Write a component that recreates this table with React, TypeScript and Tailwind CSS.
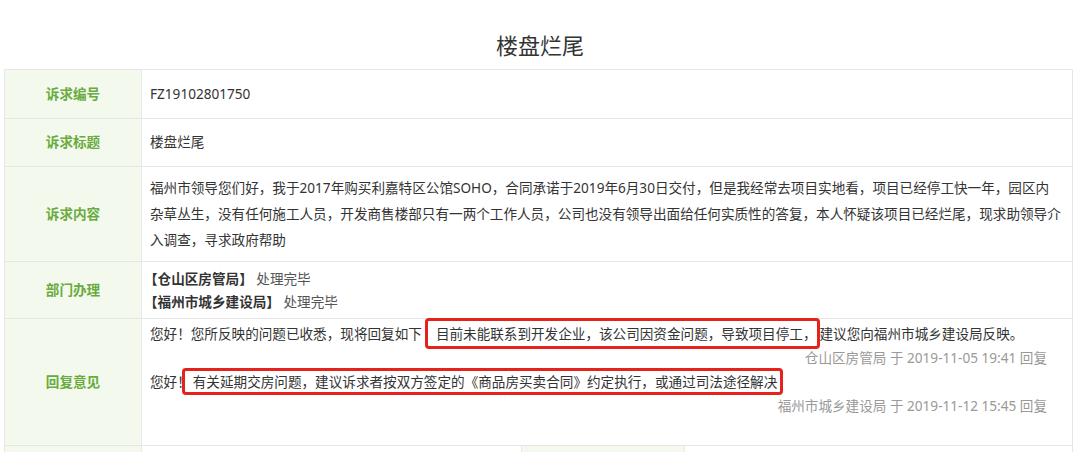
import React from "react";

const font = "font-['Noto_Sans','Noto_Sans_CJK_SC',sans-serif]";

function Label({ children }: { children: React.ReactNode }) {
  return (
    <div className="w-[137px] shrink-0 bg-[#f3f9ed] border-r border-[#e8e8e8] flex items-center justify-center text-[13.6px] font-bold text-[#6aab3e]">
      {children}
    </div>
  );
}

function Box({ children, className = "" }: { children: React.ReactNode; className?: string }) {
  return (
    <span className={"border-[3px] border-[#e5221c] rounded-[4px] " + className}>
      {children}
    </span>
  );
}

export default function App() {
  return (
    <div className={`w-[1080px] h-[452px] overflow-hidden bg-white ${font} text-[#333]`}>
      <div className="h-[69px] pt-[29px] text-center text-[22px] leading-[32px] text-[#333]">
        楼盘烂尾
      </div>
      <div className="mx-[4px] w-[1069px] border-t border-l border-r border-[#e6e6e6] text-[13.6px]">
        <div className="flex h-[49px] border-b border-[#e6e6e6]">
          <Label>诉求编号</Label>
          <div className="flex-1 flex items-center pl-[8px]">FZ19102801750</div>
        </div>
        <div className="flex h-[48px] border-b border-[#e6e6e6]">
          <Label>诉求标题</Label>
          <div className="flex-1 flex items-center pl-[8px]">楼盘烂尾</div>
        </div>
        <div className="flex h-[95px] border-b border-[#e6e6e6]">
          <Label>诉求内容</Label>
          <div className="flex-1 flex items-center pl-[8px] leading-[26px] whitespace-nowrap">
            <div>
              福州市领导您们好，我于2017年购买利嘉特区公馆SOHO，合同承诺于2019年6月30日交付，但是我经常去项目实地看，项目已经停工快一年，园区内
              <br />
              杂草丛生，没有任何施工人员，开发商售楼部只有一两个工作人员，公司也没有领导出面给任何实质性的答复，本人怀疑该项目已经烂尾，现求助领导介
              <br />
              入调查，寻求政府帮助
            </div>
          </div>
        </div>
        <div className="flex h-[57px] border-b border-[#e6e6e6]">
          <Label>部门办理</Label>
          <div className="flex-1 flex items-center pl-[2px] leading-[23px]">
            <div>
              <div>
                <span className="font-bold">【仓山区房管局】</span>
                <span className="text-[#555]"> 处理完毕</span>
              </div>
              <div>
                <span className="font-bold">【福州市城乡建设局】</span>
                <span className="text-[#555]"> 处理完毕</span>
              </div>
            </div>
          </div>
        </div>
        <div className="flex h-[127px] border-b border-[#e6e6e6]">
          <Label>回复意见</Label>
          <div className="flex-1 pl-[8px] pr-[25px] pt-[3px] leading-[24px] whitespace-nowrap">
            <div>
              您好！您所反映的问题已收悉，现将回复如下
              <Box className="ml-[3px] pl-[8px] pr-[0px] py-[3px]">
                目前未能联系到开发企业，该公司因资金问题，导致项目停工，
              </Box>
              建议您向福州市城乡建设局反映。
            </div>
            <div className="text-right text-[#999]">仓山区房管局 于 2019-11-05 19:41 回复</div>
            <div>
              您好！
              <Box className="ml-[-9px] pl-[8px] pr-[3px] py-[1px]">
                有关延期交房问题，建议诉求者按双方签定的《商品房买卖合同》约定执行，或通过司法途径解决
              </Box>
            </div>
            <div className="text-right text-[#999]">福州市城乡建设局 于 2019-11-12 15:45 回复</div>
          </div>
        </div>
        <div className="flex h-[40px] border-b border-[#e6e6e6]">
          <Label>{""}</Label>
          <div className="w-[380px] border-r border-[#e8e8e8]"></div>
          <div className="w-[163px] bg-[#f3f9ed] border-r border-[#e8e8e8]"></div>
          <div className="flex-1"></div>
        </div>
      </div>
    </div>
  );
}
